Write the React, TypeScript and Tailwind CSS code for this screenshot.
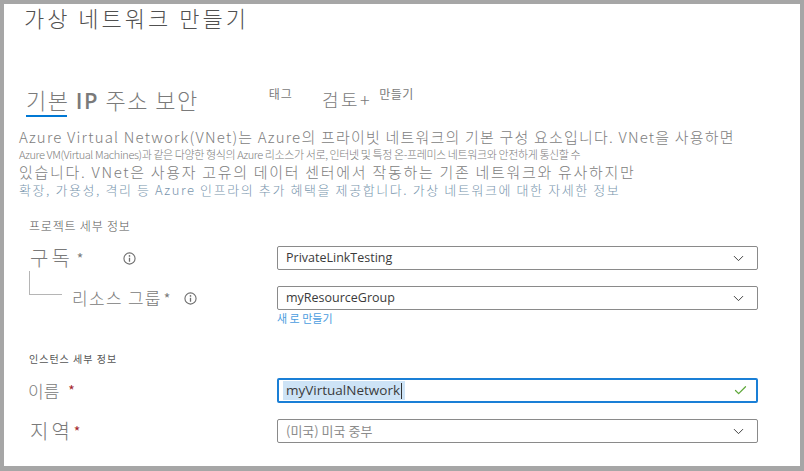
import { ChevronDown, Check } from "lucide-react";

const kr = { fontFamily: '"Noto Sans CJK KR", "Noto Sans", sans-serif' };
const ui = { fontFamily: '"Open Sans", "Noto Sans CJK KR", sans-serif' };

function Info() {
  return (
    <svg width="13" height="13" viewBox="0 0 14 14" className="text-[#6e6e6e]">
      <circle cx="7" cy="7" r="6" fill="none" stroke="currentColor" strokeWidth="1.2" />
      <circle cx="7" cy="4.2" r="0.9" fill="currentColor" />
      <path d="M7 6.2v4.3" stroke="currentColor" strokeWidth="1.4" />
    </svg>
  );
}

function Select({ value, muted }: { value: string; muted?: boolean }) {
  return (
    <div className="flex h-[24px] w-[481px] items-center justify-between rounded-[2px] border border-[#8a8a8a] bg-white pl-[8px] pr-[10px]">
      <span className={muted ? "text-[13px] text-[#8c8c8c]" : "text-[12.5px] text-[#3b3b3b]"} style={muted ? kr : ui}>
        {value}
      </span>
      <ChevronDown size={17} strokeWidth={1.3} className="text-[#333]" />
    </div>
  );
}

export default function App() {
  return (
    <div className="h-[471px] w-[804px] bg-[#a6a6a6] pb-[5px] pl-[4px] pr-[4px] pt-[4px]">
      <div className="relative h-full w-full bg-white" style={kr}>
        {/* Title */}
        <h1 className="pl-[20px] text-[22px] font-light leading-[26px] tracking-[3px] text-[#505050]">가상 네트워크 만들기</h1>

        {/* Tabs */}
        <div className="mt-[56px] flex items-start pl-[22px] text-[#7a7a7a]">
          <span className="text-[22px] font-light leading-[26px] tracking-[1.5px]">
            <span className="relative">
              기본
              <span className="absolute bottom-[-2px] left-0 right-[2px] h-[2px] bg-[#0078d4]"></span>
            </span>{" "}
            <span className="font-semibold" style={ui}>IP</span> 주소 보안
          </span>
          <span className="ml-[70px] text-[12px] leading-[16px] tracking-[1px]">태그</span>
          <span className="ml-[29px] text-[18px] font-light leading-[26px] tracking-[2.5px]">검토+</span>
          <span className="ml-[7px] text-[12px] leading-[16px] tracking-[0.5px]">만들기</span>
        </div>

        {/* Description */}
        <div className="mt-[14px] pl-[15px] font-light text-[#7d7d7d]">
          <p className="whitespace-nowrap text-[15px] leading-[19px] tracking-[1.2px]">
            Azure Virtual Network(VNet)는 Azure의 프라이빗 네트워크의 기본 구성 요소입니다. VNet을 사용하면
          </p>
          <p className="whitespace-nowrap text-[11px] leading-[16px] tracking-[-0.4px]">
            Azure VM(Virtual Machines)과 같은 다양한 형식의 Azure 리소스가 서로, 인터넷 및 특정 온-프레미스 네트워크와 안전하게 통신할 수
          </p>
          <p className="whitespace-nowrap text-[15px] leading-[20px] tracking-[1.7px]">
            있습니다. VNet은 사용자 고유의 데이터 센터에서 작동하는 기존 네트워크와 유사하지만
          </p>
          <p className="whitespace-nowrap text-[13px] leading-[16px] tracking-[1.6px] text-[#7895ad]">
            확장, 가용성, 격리 등 Azure 인프라의 추가 혜택을 제공합니다. 가상 네트워크에 대한 자세한 정보
          </p>
        </div>

        {/* Project details */}
        <p className="mt-[20px] pl-[25px] text-[12px] font-light leading-[16px] tracking-[0.8px] text-[#555]">프로젝트 세부 정보</p>

        <div className="mt-[12px] flex items-center">
          <div className="flex w-[273px] items-center pl-[26px] text-[#7a7a7a]">
            <span className="text-[20px] font-light leading-[24px] tracking-[3px]">구독</span>
            <span className="ml-[4px] text-[14px]">*</span>
            <span className="ml-[40px] flex"><Info /></span>
          </div>
          <Select value="PrivateLinkTesting" />
        </div>

        <div className="mt-[16px] flex items-center">
          <div className="flex w-[273px] items-center pl-[25px] text-[#7a7a7a]">
            <div className="mt-[-31px] h-[24px] w-[33px] border-b border-l border-[#b5b5b5]"></div>
            <span className="ml-[10px] text-[17px] font-light leading-[22px] tracking-[1.3px]">리소스 그룹</span>
            <span className="ml-[2px] text-[14px]">*</span>
            <span className="ml-[14px] flex"><Info /></span>
          </div>
          <Select value="myResourceGroup" />
        </div>
        <p className="ml-[273px] mt-[1px] text-[11px] leading-[14px] text-[#4b9de0]">새 로 만들기</p>

        {/* Instance details */}
        <p className="mt-[27px] pl-[25px] text-[10px] leading-[14px] tracking-[1px] text-[#555]">인스턴스 세부 정보</p>

        <div className="mt-[12px] flex items-center">
          <div className="flex w-[273px] items-center pl-[24px] text-[#7a7a7a]">
            <span className="text-[17px] font-light leading-[24px]">이름</span>
            <span className="ml-[9px] text-[14px] text-[#a4262c]">*</span>
          </div>
          <div className="flex h-[25px] w-[481px] items-center justify-between rounded-[2px] border-2 border-[#1a7fd6] bg-white pl-[4px] pr-[8px]">
            <span className="flex items-center bg-[#cde3f6] px-[3px] text-[13.5px] leading-[19px] text-[#3b3b3b]" style={ui}>
              myVirtualNetwork
              <span className="ml-[1px] h-[16px] w-[1px] bg-[#333]"></span>
            </span>
            <Check size={15} strokeWidth={2} className="text-[#5fa83a]" />
          </div>
        </div>

        <div className="mt-[16px] flex items-center">
          <div className="flex w-[273px] items-center pl-[26px] text-[#7a7a7a]">
            <span className="text-[20px] font-light leading-[24px] tracking-[3px]">지역</span>
            <span className="ml-[1px] text-[14px] text-[#a4262c]">*</span>
          </div>
          <Select value="(미국) 미국 중부" muted />
        </div>
      </div>
    </div>
  );
}
